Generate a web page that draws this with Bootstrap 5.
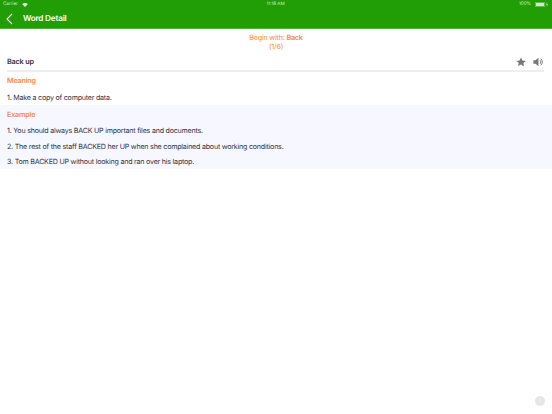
<!DOCTYPE html>
<html lang="en">
<head>
  <meta charset="UTF-8">
  <meta name="viewport" content="width=device-width, initial-scale=1.0">
  <title>Word Detail</title>
  <link href="https://cdn.jsdelivr.net/npm/bootstrap@5.3.0/dist/css/bootstrap.min.css" rel="stylesheet">
  <style>
    html, body {
      height: 414px;
      overflow: hidden;
    }

    body {
      background: #fff;
      font-family: Inter, "Liberation Sans", sans-serif;
      font-size: 7.1px;
      letter-spacing: -0.21px;
      color: #33333f;
      text-rendering: geometricPrecision;
    }

    /* keeps text greyscale antialiased, no colour fringes */
    .page-wrap {
      position: relative;
      height: 414px;
      opacity: .99;
    }

    .app-bar {
      background: #1f9c03;
      border-bottom: 1px solid #45b52c;
      height: 29px;
      color: #fff;
    }

    .status-row {
      height: 9px;
      font-size: 4.6px;
      letter-spacing: -0.05px;
      padding: 1px 4px 0 3px;
      color: #d6efd0;
    }

    .status-row > span {
      flex: 1 1 0;
    }

    .title-row {
      height: 19px;
      padding-left: 6px;
    }

    .title-row h1 {
      font-size: 8.2px;
      font-weight: 600;
      margin: 0 0 0 10px;
    }

    .begin-with {
      color: #f98a3f;
      font-size: 7.2px;
      line-height: 9px;
      padding-top: 3.5px;
    }

    .word-row {
      height: 17px;
      margin: 2.5px 8px 0 7px;
      padding-right: 1px;
      border-bottom: 2px solid #eeeeee;
      font-weight: 600;
      font-size: 7.3px;
      box-sizing: content-box;
    }

    .word-name {
      padding-top: 1px;
    }

    .word-icons {
      gap: 7px;
    }

    .section-title {
      color: #f98a3f;
      font-weight: 600;
      font-size: 7.2px;
      line-height: 11px;
    }

    .meaning-block {
      padding: 2.5px 7px 0;
      height: 33px;
    }

    .example-block {
      background: #f6f7ff;
      padding: 3.5px 7px 0;
      height: 64px;
    }

    .entry-line {
      line-height: 11px;
      margin: 5px 0 0;
    }

    .meaning-block .entry-line {
      margin-top: 6px;
    }

    .example-block .entry-line:last-child {
      margin-top: 4px;
    }

    .next-dot {
      position: absolute;
      right: 7px;
      bottom: 8px;
      width: 10px;
      height: 10px;
      border-radius: 50%;
      background: #e6e6e6;
    }
  </style>
</head>
<body>
  <div class="page-wrap">
    <div class="app-bar">
      <div class="status-row d-flex align-items-center">
        <span class="d-flex align-items-center gap-1">Carrier
          <svg width="6" height="4" viewBox="0 0 14 10"><path d="M7 10 0 3a10 10 0 0 1 14 0z" fill="#e3f4df"/></svg>
        </span>
        <span class="text-center">11:16 AM</span>
        <span class="d-flex align-items-center justify-content-end gap-1">100%
          <svg width="13" height="5" viewBox="0 0 26 10"><rect x="0.5" y="0.5" width="19" height="9" rx="2" fill="none" stroke="#cdeac6"/><rect x="2" y="2" width="16" height="6" fill="#cdeac6"/><path d="M24.500 0l-2 5.500h1.500l-.5 4.500 2-5.500h-1.500z" fill="#fff"/></svg>
        </span>
      </div>
      <div class="title-row d-flex align-items-center">
        <svg width="7" height="12" viewBox="0 0 7 12"><path d="M6 1 1 6l5 5" fill="none" stroke="#fff" stroke-width="1.1"/></svg>
        <h1>Word Detail</h1>
      </div>
    </div>

    <div class="begin-with text-center">
      <div>Begin with: <b class="fw-semibold">Back</b></div>
      <div>(1/6)</div>
    </div>

    <div class="word-row d-flex align-items-center justify-content-between">
      <span class="word-name">Back up</span>
      <div class="word-icons d-flex align-items-center">
        <svg width="10" height="10" viewBox="0 0 24 24"><path d="M12 1l3.400 7.300 7.900 1-5.800 5.500 1.500 7.900L12 18l-7 3.700 1.500-7.900L.7 9.300l7.900-1z" fill="#777"/></svg>
        <svg width="10" height="10" viewBox="0 0 24 24"><path d="M1 8h5l7-6v20l-7-6H1z" fill="#777"/><path d="M16 7a6 6 0 0 1 0 10M18.500 4a10 10 0 0 1 0 16" fill="none" stroke="#777" stroke-width="2.200"/></svg>
      </div>
    </div>

    <div class="meaning-block">
      <div class="section-title">Meaning</div>
      <p class="entry-line">1. Make a copy of computer data.</p>
    </div>

    <div class="example-block">
      <div class="section-title">Example</div>
      <p class="entry-line">1. You should always BACK UP important files and documents.</p>
      <p class="entry-line">2. The rest of the staff BACKED her UP when she complained about working conditions.</p>
      <p class="entry-line">3. Tom BACKED UP without looking and ran over his laptop.</p>
    </div>

    <div class="next-dot d-flex align-items-center justify-content-center">
      <svg width="4" height="6" viewBox="0 0 4 6"><path d="M1 .8 3.200 3 1 5.200" fill="none" stroke="#f4f4f4" stroke-width=".7"/></svg>
    </div>
  </div>

  <script src="https://cdn.jsdelivr.net/npm/bootstrap@5.3.0/dist/js/bootstrap.bundle.min.js"></script>
</body>
</html>
